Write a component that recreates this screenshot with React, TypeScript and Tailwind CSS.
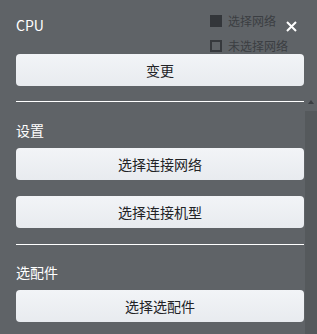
import React from "react";

const font = { fontFamily: '"Noto Sans CJK SC", "Noto Sans", sans-serif' };

function Btn({ label }: { label: string }) {
  return (
    <button className="h-8 w-full rounded-[4px] bg-gradient-to-b from-[#f2f4f7] to-[#e8ebef] text-[14px] text-[#222326]">
      {label}
    </button>
  );
}

export default function App() {
  return (
    <div className="relative flex h-[334px] w-[317px] overflow-hidden bg-[#5f6367]" style={font}>
      <div className="flex flex-1 flex-col pl-4 pr-px pt-[15px]">
        <div className="h-5 text-[14px] leading-5 text-white">CPU</div>
        <div className="mt-[19px]">
          <Btn label="变更" />
        </div>
        <div className="mt-[15px] h-px bg-white" />
        <div className="mt-[18px] h-5 text-[14px] leading-5 text-white">设置</div>
        <div className="mt-2 flex flex-col gap-4">
          <Btn label="选择连接网络" />
          <Btn label="选择连接机型" />
        </div>
        <div className="mt-4 h-px bg-white" />
        <div className="mt-[17px] h-5 text-[14px] leading-5 text-white">选配件</div>
        <div className="mt-2">
          <Btn label="选择选配件" />
        </div>
      </div>
      <div className="flex w-3 flex-col pt-[100px]">
        <div className="flex h-[11px] justify-center">
          <svg width="6" height="4" viewBox="0 0 6 4">
            <path d="M0 4 L3 0 L6 4 Z" fill="#3c3f43" />
          </svg>
        </div>
        <div className="flex-1 bg-[#55595c]" />
      </div>

      <div className="absolute left-[210px] top-[15px] flex flex-col gap-[13px] text-[12px] leading-3 text-[#3b3e42]">
        <div className="flex items-center gap-[6px]">
          <span className="h-3 w-3 bg-[#33363a]" />
          <span>选择网络</span>
        </div>
        <div className="flex items-center gap-[6px]">
          <span className="h-3 w-3 border-2 border-[#36393d]" />
          <span>未选择网络</span>
        </div>
      </div>
      <div className="absolute left-[286px] top-[21px]">
        <svg width="11" height="11" viewBox="0 0 11 11">
          <path d="M1 1 L10 10 M10 1 L1 10" stroke="#ffffff" strokeWidth="2" />
        </svg>
      </div>
    </div>
  );
}
